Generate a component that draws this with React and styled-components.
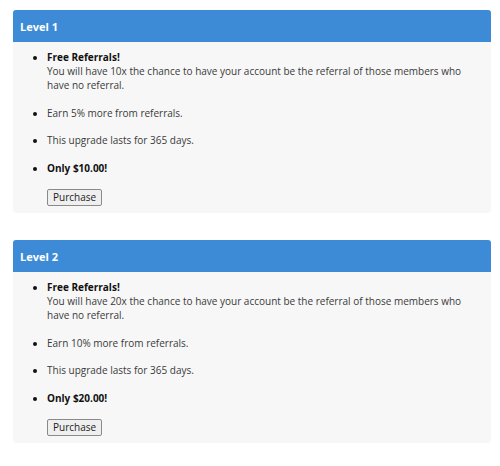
import React from "react";
import styled, { createGlobalStyle } from "styled-components";

const Global = createGlobalStyle`
  html, body { margin: 0; padding: 0; background: #ffffff; }
  body { font-family: "Open Sans", "Noto Sans", sans-serif; color: #3a3a3a; }
`;

const Page = styled.div`
  display: flex;
  flex-direction: column;
  gap: 27px;
  padding: 10px 9px 0 13px;
`;

const Card = styled.section`
  background: #f7f7f7;
  border-radius: 3px;
  overflow: hidden;
`;

const Header = styled.div`
  height: 32px;
  display: flex;
  align-items: center;
  padding: 0 7px;
  background: #3d8bd6;
  color: #ffffff;
  font-weight: 700;
  font-size: 11px;
`;

const Body = styled.div`
  padding: 8px 20px 7px 0;
`;

const List = styled.ul`
  margin: 0;
  padding: 0 0 1px 34px;
  list-style: disc;
`;

const Item = styled.li`
  font-size: 10px;
  line-height: 14px;
  margin-bottom: 13.5px;
  color: ${(p) => (p.$strong ? "#111111" : "#3a3a3a")};
  font-weight: ${(p) => (p.$strong ? 700 : 400)};
  &::marker { color: #111111; }
`;

const Title = styled.strong`
  display: block;
  color: #111111;
  font-weight: 700;
`;

const Desc = styled.span`
  display: block;
`;

const Button = styled.button`
  margin: 0 0 0 34px;
  height: 17px;
  padding: 0 5px;
  font-family: inherit;
  font-size: 10px;
  line-height: 15px;
  color: #222222;
  background: #efefef;
  border: 1px solid #8a8a8a;
  border-radius: 2px;
  display: block;
`;

const levels = [
  { n: 1, x: 10, pct: 5, price: "$10.00" },
  { n: 2, x: 20, pct: 10, price: "$20.00" },
];

export default function App() {
  return (
    <>
      <Global />
      <Page>
        {levels.map((l) => (
          <Card key={l.n}>
            <Header>Level {l.n}</Header>
            <Body>
              <List>
                <Item>
                  <Title>Free Referrals!</Title>
                  <Desc>
                    You will have {l.x}x the chance to have your account be the referral of those members who have no referral.
                  </Desc>
                </Item>
                <Item>Earn {l.pct}% more from referrals.</Item>
                <Item>This upgrade lasts for 365 days.</Item>
                <Item $strong>Only {l.price}!</Item>
              </List>
              <Button>Purchase</Button>
            </Body>
          </Card>
        ))}
      </Page>
    </>
  );
}
